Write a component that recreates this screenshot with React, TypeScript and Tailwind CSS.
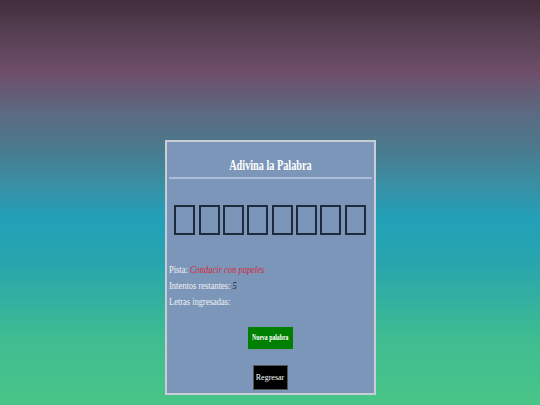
const LETTERS = 8;

export default function App() {
  return (
    <div className="flex h-[405px] w-[540px] flex-col items-center bg-[linear-gradient(to_bottom,#412d3b_0%,#553f52_8%,#6e4e6a_18%,#5b6a82_28%,#4a7a8e_37%,#3a8ea3_45%,#22a0b8_54%,#27a4ae_64%,#33b0a0_74%,#3fbd90_84%,#49c588_100%)] pt-[140px] font-['Liberation_Serif',serif]">
      <div className="flex h-[255px] w-[211px] flex-col border-2 border-[#c9ced6] bg-[#7b96b8] px-[2px] pt-[16px]">
        <h2 className="text-center text-[14px] font-bold leading-[16px] text-white">
          <span className="inline-block scale-x-[0.73]">Adivina la Palabra</span>
        </h2>
        <div className="mt-[3px] h-[2px] bg-[#a9bcd9]" />

        <div className="mt-[26px] flex justify-center gap-[3.3px]">
          {Array.from({ length: LETTERS }).map((_, i) => (
            <span key={i} className="h-[30px] w-[21px] border-2 border-[#1f2b3d]" />
          ))}
        </div>

        <div className="mt-[26px] text-[11px] leading-[16px] text-[#f1f1f1]">
          <p>
            <span className="inline-block origin-left scale-x-[0.77] whitespace-nowrap">
              Pista: <em className="text-[#d8283b]">Conducir con papeles</em>
            </span>
          </p>
          <p>
            <span className="inline-block origin-left scale-x-[0.77] whitespace-nowrap">
              Intentos restantes: <em className="text-[#1c2232]">5</em>
            </span>
          </p>
          <p>
            <span className="inline-block origin-left scale-x-[0.77] whitespace-nowrap">
              Letras ingresadas:
            </span>
          </p>
        </div>

        <button className="mx-auto mt-[18px] flex h-[22px] w-[45px] items-center justify-center bg-[#008000] text-[8px] font-bold text-white">
          <span className="inline-block scale-x-[0.72] whitespace-nowrap">Nueva palabra</span>
        </button>
        <button className="mx-auto mt-[16px] flex h-[25px] w-[35px] items-center justify-center border border-[#555] bg-black text-[8px] text-white">
          <span className="whitespace-nowrap">Regresar</span>
        </button>
      </div>
    </div>
  );
}
